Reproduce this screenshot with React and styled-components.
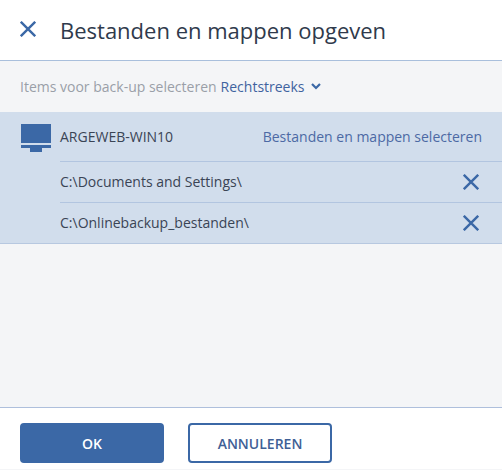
import React from "react";
import styled, { createGlobalStyle } from "styled-components";

const Global = createGlobalStyle`
  html, body { margin: 0; padding: 0; background: #fff; }
  body { font-family: "Open Sans", "Liberation Sans", sans-serif; }
`;
const Page = styled.div`
  width: 502px; height: 470px; display: flex; flex-direction: column; overflow: hidden; background: #f4f5f7;
`;
const Header = styled.header`
  height: 61px; flex: none; display: flex; align-items: center; background: #fff; box-sizing: border-box;
  border-bottom: 1px solid #a9bfdc; padding-left: 20px; gap: 24px;
`;
const HeaderClose = styled.span`display: flex; margin-top: -2px;`;
const Title = styled.h1`
  margin: 0; font-size: 22px; font-weight: 400; color: #2f3a4c; line-height: 60px;
`;
const Body = styled.main`flex: 1; display: flex; flex-direction: column;`;
const Filter = styled.div`
  height: 51px; flex: none; display: flex; align-items: center; padding-left: 20px; font-size: 14px; color: #9a9fa8; box-sizing: border-box;
`;
const FilterValue = styled.span`color: #3f639f; margin-left: 4px; margin-right: 6px;`;
const Chevron = styled.svg`flex: none;`;
const Panel = styled.section`background: #d1ddec; border-bottom: 1px solid #b7c8e0;`;
const Row = styled.div`
  height: ${p => p.$h}px; display: flex; align-items: center; box-sizing: border-box;
  padding-left: ${p => p.$top ? 21 : 60}px;
`;
const RowInner = styled.div`
  flex: 1; height: 100%; display: flex; align-items: center; justify-content: space-between; min-width: 0;
  padding-right: 20px; font-size: 14px; color: #3a4455; box-sizing: border-box;
  ${p => p.$line && "border-bottom: 1px solid #b2c5e0;"}
`;
const PathText = styled.span`padding-bottom: 1px;`;
const LinkText = styled.span`color: #4c69a4;`;
const Computer = styled.svg`flex: none; margin-right: 9px; margin-top: 2px;`;
const RemoveBtn = styled.span`display: flex; margin-right: 3px;`;
const Footer = styled.footer`
  height: 63px; flex: none; display: flex; align-items: flex-start; gap: 24px; padding: 15px 20px 0; background: #fff;
  border-top: 1px solid #aebfdc; border-bottom: 1px solid #f4f5f7; box-sizing: border-box;
`;
const Button = styled.button`
  width: 144px; height: 40px; box-sizing: border-box; border-radius: 4px; font-family: inherit; font-size: 14px; font-weight: 600; padding: 0;
  border: 2px solid #3b68a6;
  background: ${p => p.$primary ? "#3b68a6" : "#fff"};
  color: ${p => p.$primary ? "#fff" : "#3f5f96"};
`;
const X = ({ size, w = 2.4 }) => (
  <svg width={size} height={size} viewBox="0 0 16 16" fill="none" stroke="#3b68a6" strokeWidth={w}>
    <path d="M0.8 0.8L15.2 15.2M15.2 0.8L0.8 15.2" />
  </svg>
);

export default function App() {
  return (
    <Page>
      <Global />
      <Header>
        <HeaderClose><X size={16} /></HeaderClose>
        <Title>Bestanden en mappen opgeven</Title>
      </Header>
      <Body>
        <Filter>
          Items voor back-up selecteren
          <FilterValue>Rechtstreeks</FilterValue>
          <Chevron width="10" height="7" viewBox="0 0 10 7" fill="none" stroke="#3b68a6" strokeWidth="2.2"><path d="M1 1l4 4 4-4" /></Chevron>
        </Filter>
        <Panel>
          <Row $h={50} $top>
            <Computer width="30" height="28" viewBox="0 0 30 28" fill="#3b68a6">
              <path d="M0 0h30v19H0zM0 21h30v3H21v4H9v-4H0z" />
            </Computer>
            <RowInner $line>
              <span>ARGEWEB-WIN10</span>
              <LinkText>Bestanden en mappen selecteren</LinkText>
            </RowInner>
          </Row>
          <Row $h={41}>
            <RowInner $line>
              <PathText>C:\Documents and Settings\</PathText>
              <RemoveBtn><X size={16} /></RemoveBtn>
            </RowInner>
          </Row>
          <Row $h={40}>
            <RowInner>
              <PathText>C:\Onlinebackup_bestanden\</PathText>
              <RemoveBtn><X size={16} /></RemoveBtn>
            </RowInner>
          </Row>
        </Panel>
      </Body>
      <Footer>
        <Button $primary>OK</Button>
        <Button>ANNULEREN</Button>
      </Footer>
    </Page>
  );
}
